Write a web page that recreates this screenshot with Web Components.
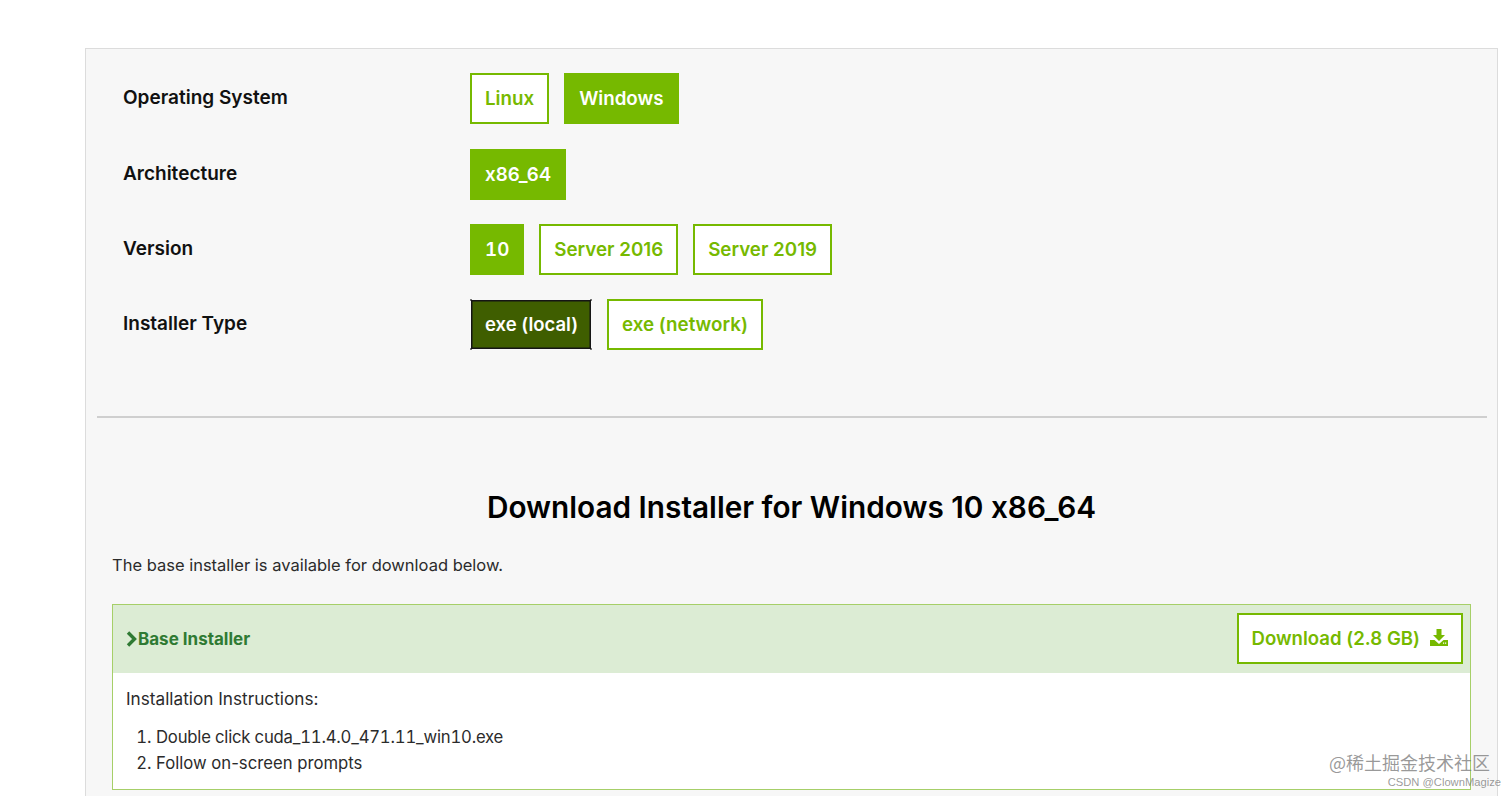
<!DOCTYPE html>
<html>
<head>
<meta charset="utf-8">
<title>Download Installer</title>
<style>
  html, body { margin: 0; padding: 0; background: #fff; overflow: hidden; height: 796px; }
  body { font-family: Inter, "Liberation Sans", sans-serif; font-feature-settings: "calt" 0; }
</style>
</head>
<body>
<cuda-page>
  <selector-row label="Operating System">
    <option-btn>Linux</option-btn>
    <option-btn selected>Windows</option-btn>
  </selector-row>
  <selector-row label="Architecture">
    <option-btn selected>x86_64</option-btn>
  </selector-row>
  <selector-row label="Version">
    <option-btn selected tabular>10</option-btn>
    <option-btn>Server 2016</option-btn>
    <option-btn>Server 2019</option-btn>
  </selector-row>
  <selector-row label="Installer Type">
    <option-btn focused>exe (local)</option-btn>
    <option-btn>exe (network)</option-btn>
  </selector-row>
  <download-panel slot="download"></download-panel>
</cuda-page>
<water-mark></water-mark>

<script>
class CudaPage extends HTMLElement {
  constructor() {
    super();
    this.attachShadow({mode: "open"});
  }
  connectedCallback() {
    this.shadowRoot.innerHTML = `
    <style>
      :host {
        display: block;
        margin: 48px 14px 0 85px;
        height: 760px;
        box-sizing: border-box;
        background: #f7f7f7;
        border: 1px solid #dcdcdc;
        padding: 24.3px 10px 0 11px;
      }
      .rows {
        display: flex;
        flex-direction: column;
        gap: 24.34px;
        padding-left: 26px;
      }
      hr {
        border: 0;
        height: 2px;
        background: #cfcfcf;
        margin: 66px 0 0;
      }
    </style>
    <div class="rows"><slot></slot></div>
    <hr>
    <slot name="download"></slot>`;
  }
}

class SelectorRow extends HTMLElement {
  constructor() {
    super();
    this.attachShadow({mode: "open"});
  }
  connectedCallback() {
    this.shadowRoot.innerHTML = `
    <style>
      :host { display: flex; height: 51px; }
      .label {
        width: 347px;
        font-size: 19px;
        font-weight: 600;
        color: #111;
        line-height: 49px;
      }
      .opts { display: flex; gap: 15px; }
    </style>
    <div class="label">${this.getAttribute("label")}</div>
    <div class="opts"><slot></slot></div>`;
  }
}

class OptionBtn extends HTMLElement {
  constructor() {
    super();
    this.attachShadow({mode: "open"});
  }
  connectedCallback() {
    this.shadowRoot.innerHTML = `
    <style>
      :host {
        display: block;
        height: 51px;
        box-sizing: border-box;
        padding: 0 13px;
        border: 2px solid #76b900;
        background: #fff;
        color: #76b900;
        font-size: 18.75px;
        font-weight: 600;
        line-height: 47px;
        white-space: nowrap;
      }
      :host([tabular]) { font-variant-numeric: tabular-nums; }
      :host([selected]) { background: #76b900; color: #fff; }
      :host([focused]) {
        border: 1px solid transparent;
        padding: 0 13px 0 14px;
        font-size: 18.5px;
        line-height: 49px;
        color: #fff;
        box-shadow: inset 0 0 0 1.5px #151515;
        background:
          linear-gradient(#777, #777) 0 0 / 2px 2px no-repeat border-box,
          linear-gradient(#777, #777) 100% 0 / 2px 2px no-repeat border-box,
          linear-gradient(#777, #777) 0 100% / 2px 2px no-repeat border-box,
          linear-gradient(#777, #777) 100% 100% / 2px 2px no-repeat border-box,
          #3f5e00 padding-box;
      }
    </style>
    <slot></slot>`;
  }
}

class DownloadPanel extends HTMLElement {
  constructor() {
    super();
    this.attachShadow({mode: "open"});
  }
  connectedCallback() {
    this.shadowRoot.innerHTML = `
    <style>
      :host { display: block; padding: 0 16px 0 15px; }
      h2 {
        margin: 70px 0 0;
        text-align: center;
        font-size: 29.75px;
        line-height: 38px;
        font-weight: 600;
        color: #000;
      }
      p.intro {
        margin: 27px 0 0;
        font-size: 16.5px;
        line-height: 24px;
        color: #2b2b2b;
      }
      .box {
        margin-top: 27px;
        border: 1px solid #a6cf68;
        background: #fff;
        height: 186px;
        box-sizing: border-box;
      }
      .head {
        height: 68px;
        background: #dcecd4;
        display: flex;
        align-items: center;
        justify-content: space-between;
        padding: 0 7px 0 13px;
      }
      .title {
        display: flex;
        align-items: center;
        gap: 1px;
        font-size: 17px;
        font-weight: 700;
        color: #2f7a33;
      }
      .dl {
        display: flex;
        align-items: center;
        gap: 10px;
        height: 51px;
        margin-bottom: 1px;
        box-sizing: border-box;
        padding: 0 13px 2px;
        border: 2px solid #76b900;
        background: #fff;
        color: #76b900;
        font-size: 18.6px;
        font-weight: 600;
      }
      .body { padding: 14px 13px 0; color: #2b2b2b; font-size: 16.7px; }
      .body p { margin: 0; line-height: 24px; font-size: 17.2px; }
      ol { margin: 13px 0 0; padding: 0 0 0 30px; }
      li { line-height: 26px; }
      .file { font-variant-numeric: tabular-nums; letter-spacing: -.2px; }
    </style>
    <h2>Download Installer for Windows 10 x86_64</h2>
    <p class="intro">The base installer is available for download below.</p>
    <div class="box">
      <div class="head">
        <div class="title">
          <svg width="11" height="16" viewBox="0 0 11 16"><path d="M2 1.5 8.5 8 2 14.5" fill="none" stroke="#2f7a33" stroke-width="3.4"/></svg>
          <span>Base Installer</span>
        </div>
        <div class="dl">
          <span>Download (2.8 GB)</span>
          <svg width="18" height="17" viewBox="0 0 18 17"><path d="M6.5 0h5v6h3.5L9 12 3 6h3.5z" fill="#76b900"/><path d="M0 11h4.5L9 15l4.5-4H18v6H0z" fill="#76b900"/><path d="M13 13.5h1.2v1.2H13zM15 13.5h1.2v1.2H15z" fill="#fff"/></svg>
        </div>
      </div>
      <div class="body">
        <p>Installation Instructions:</p>
        <ol>
          <li><span class="file">Double click cuda_11.4.0_471.11_win10.exe</span></li>
          <li>Follow on-screen prompts</li>
        </ol>
      </div>
    </div>`;
  }
}

class WaterMark extends HTMLElement {
  constructor() {
    super();
    this.attachShadow({mode: "open"});
  }
  connectedCallback() {
    this.shadowRoot.innerHTML = `
    <style>
      :host {
        position: absolute;
        right: 11px;
        top: 749px;
        text-align: right;
        color: rgba(120,120,120,.75);
        font-family: "Noto Sans CJK SC", "Liberation Sans", sans-serif;
      }
      .a { font-size: 18px; line-height: 26px; margin-right: 11px; }
      .b { font-size: 11.2px; line-height: 14px; font-family: "Liberation Sans", sans-serif; }
    </style>
    <div class="a">@稀土掘金技术社区</div>
    <div class="b">CSDN @ClownMagize</div>`;
  }
}

customElements.define("cuda-page", CudaPage);
customElements.define("selector-row", SelectorRow);
customElements.define("option-btn", OptionBtn);
customElements.define("download-panel", DownloadPanel);
customElements.define("water-mark", WaterMark);
</script>
</body>
</html>
